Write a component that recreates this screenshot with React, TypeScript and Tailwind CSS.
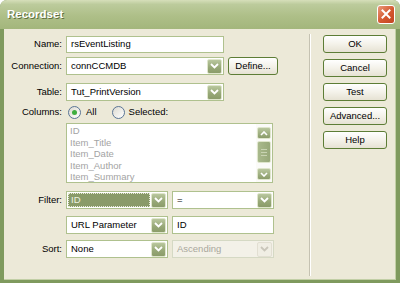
import type { ReactNode } from 'react'

const font = "font-['Liberation_Sans',Arial,sans-serif]"

function DropBtn({ disabled }: { disabled?: boolean }) {
  return (
    <div
      className={
        disabled
          ? 'w-[15px] h-[15px] mr-[1px] flex items-center justify-center rounded-[2px] border border-[#e2dfd2] bg-[#f0eee4]'
          : 'w-[15px] h-[15px] mr-[1px] flex items-center justify-center rounded-[2px] border border-[#dfe6cc] bg-[linear-gradient(to_bottom,#b9c79e,#96a776_60%,#8b9c6a)]'
      }
    >
      <svg width="9" height="6" viewBox="0 0 9 6">
        <path d="M1 1 L4.5 4.5 L8 1" stroke={disabled ? '#c9c6ba' : '#ffffff'} strokeWidth="1.8" fill="none" />
      </svg>
    </div>
  )
}

function Select({ value, width, focused, disabled }: { value: string; width: string; focused?: boolean; disabled?: boolean }) {
  return (
    <div
      className={`${width} h-[18px] flex items-center border ${disabled ? 'border-[#d5d9c4] bg-[#f3f1e8]' : 'border-[#afc18e] bg-white'}`}
    >
      {focused ? (
        <div className="flex-1 h-[14px] ml-[1px] mr-[1px] bg-[#8a9b69] border border-dotted border-[#e8ecd8] flex items-center pl-[2px] text-[#eef2e0]">
          {value}
        </div>
      ) : (
        <div className={`flex-1 pl-[4px] ${disabled ? 'text-[#a9a79c]' : 'text-black'}`}>{value}</div>
      )}
      <DropBtn disabled={disabled} />
    </div>
  )
}

function Row({ label, children, className }: { label?: string; children: ReactNode; className: string }) {
  return (
    <div className={`flex items-center ${className}`}>
      <div className="w-[62px] pr-[4px] text-right text-black">{label}</div>
      <div className="flex items-center gap-[4px]">{children}</div>
    </div>
  )
}

function XpButton({ children, className = '' }: { children: ReactNode; className?: string }) {
  return (
    <div
      className={`h-[18px] flex items-center justify-center rounded-[3px] border border-[#5d7d36] bg-[linear-gradient(to_bottom,#ffffff,#f4f2ea_50%,#e6e2d3)] text-black ${className}`}
    >
      {children}
    </div>
  )
}

function Radio({ checked }: { checked?: boolean }) {
  return (
    <div className="w-[13px] h-[13px] rounded-full border border-[#5a7596] bg-[linear-gradient(135deg,#dcdad0,#ffffff)] flex items-center justify-center">
      {checked && <div className="w-[5px] h-[5px] rounded-full bg-[#3fae3f]" />}
    </div>
  )
}

function ScrollBtn({ up }: { up?: boolean }) {
  return (
    <div className="w-[14px] h-[12px] flex items-center justify-center rounded-[2px] border border-[#dfe6cc] bg-[linear-gradient(to_bottom,#b9c79e,#8b9c6a)]">
      <svg width="8" height="5" viewBox="0 0 8 5">
        <path d={up ? 'M1 4 L4 1 L7 4' : 'M1 1 L4 4 L7 1'} stroke="#ffffff" strokeWidth="1.6" fill="none" />
      </svg>
    </div>
  )
}

export default function App() {
  const columns = ['ID', 'Item_Title', 'Item_Date', 'Item_Author', 'Item_Summary']

  return (
    <div className={`w-[400px] h-[283px] bg-white ${font} text-[9.5px]`}>
      <div className="w-full h-full rounded-t-[7px] overflow-hidden bg-[#7f9a5e] flex flex-col">
        <div className="h-[29px] shrink-0 flex items-center justify-between pl-[7px] pr-[5px] bg-[linear-gradient(to_bottom,#d6dfba,#bccb9c_15%,#aebf88_55%,#a3b67c)]">
          <span className="text-[11.5px] font-bold text-white [text-shadow:1px_1px_0_#5f7040]">Recordset</span>
          <div className="w-[18px] h-[19px] mt-[-1px] rounded-[3px] border border-white bg-[linear-gradient(135deg,#e99a7c,#d4572f_55%,#c24522)] flex items-center justify-center">
            <svg width="10" height="10" viewBox="0 0 10 10">
              <path d="M1.5 1.5 L8.5 8.5 M8.5 1.5 L1.5 8.5" stroke="#ffffff" strokeWidth="2" strokeLinecap="square" />
            </svg>
          </div>
        </div>

        <div className="flex-1 ml-[4px] mr-[4px] mb-[3px] border-b border-r border-[#c2cfa6] bg-[#ece9d8] flex">
          <div className="w-[305px] shrink-0 flex flex-col">
            <Row label="Name:" className="mt-[7px] h-[17px]">
              <div className="w-[158px] h-[17px] border border-[#afc18e] bg-white flex items-center pl-[4px]">rsEventListing</div>
            </Row>
            <Row label="Connection:" className="mt-[4px] h-[18px]">
              <Select value="connCCMDB" width="w-[158px]" />
              <XpButton className="w-[50px]">Define...</XpButton>
            </Row>
            <Row label="Table:" className="mt-[8px] h-[18px]">
              <Select value="Tut_PrintVersion" width="w-[158px]" />
            </Row>
            <Row label="Columns:" className="mt-[5px] h-[13px]">
              <div className="flex items-center ml-[2px]">
                <Radio checked />
                <span className="ml-[5px]">All</span>
                <div className="ml-[15px]"><Radio /></div>
                <span className="ml-[4px]">Selected:</span>
              </div>
            </Row>
            <div className="mt-[4px] ml-[62px] w-[207px] h-[60px] border border-[#afc18e] bg-white flex">
              <div className="flex-1 pl-[3px] pt-[1px] text-[#a3a3a3] text-[9.5px] leading-[11.5px]">
                {columns.map(c => (
                  <div key={c}>{c}</div>
                ))}
              </div>
              <div className="w-[16px] flex flex-col items-center pt-[3px] pb-[2px] bg-[#fbfbf8]">
                <ScrollBtn up />
                <div className="mt-[2px] w-[14px] h-[22px] rounded-[2px] border border-[#dfe6cc] bg-[linear-gradient(to_right,#a9b98c,#97a879)] flex flex-col items-center justify-center gap-[2px]">
                  <div className="w-[6px] h-[1px] bg-[#c8d3b2]" />
                  <div className="w-[6px] h-[1px] bg-[#c8d3b2]" />
                  <div className="w-[6px] h-[1px] bg-[#c8d3b2]" />
                </div>
                <div className="flex-1" />
                <ScrollBtn />
              </div>
            </div>
            <Row label="Filter:" className="mt-[8px] h-[18px]">
              <Select value="ID" width="w-[102px]" focused />
              <Select value="=" width="w-[102px]" />
            </Row>
            <Row className="mt-[7px] h-[18px]">
              <Select value="URL Parameter" width="w-[102px]" />
              <div className="w-[102px] h-[18px] border border-[#afc18e] bg-white flex items-center pl-[4px]">ID</div>
            </Row>
            <Row label="Sort:" className="mt-[6px] h-[18px]">
              <Select value="None" width="w-[102px]" />
              <Select value="Ascending" width="w-[102px]" disabled />
            </Row>
          </div>

          <div className="w-[2px] mt-[5px] mb-[3px] border-l border-[#c5c2b2] border-r border-r-white" />

          <div className="ml-[12px] w-[64px] flex flex-col gap-[6px] pt-[6px]">
            <XpButton>OK</XpButton>
            <XpButton>Cancel</XpButton>
            <XpButton>Test</XpButton>
            <XpButton>Advanced...</XpButton>
            <XpButton>Help</XpButton>
          </div>
        </div>
      </div>
    </div>
  )
}
